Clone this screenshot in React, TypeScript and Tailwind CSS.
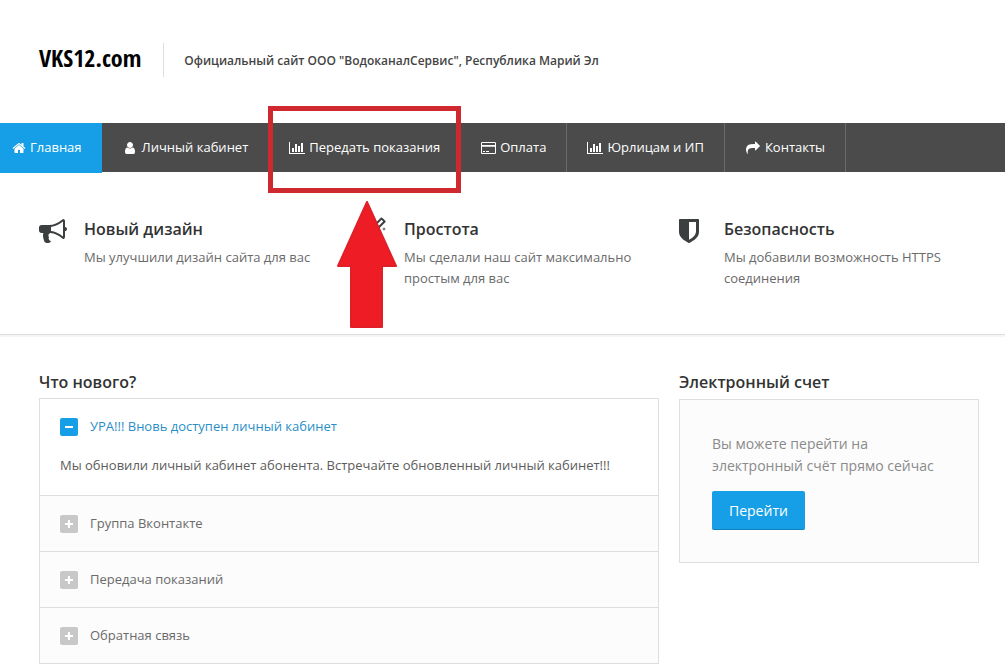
import { useState, type ReactNode } from 'react';

type IconProps = { box: string; d: string; className: string };

const Icon = ({ box, d, className }: IconProps) => (
  <svg viewBox={box} className={className} fill="currentColor" aria-hidden="true">
    <path d={d} />
  </svg>
);

const HOME =
  'M1472 992v480q0 26-19 45t-45 19h-384v-384h-256v384h-384q-26 0-45-19t-19-45v-480q0-1 .5-3t.5-3l575-474 575 474q1 2 1 6zm223-69l-62 74q-8 9-21 11h-3q-13 0-21-7l-692-577-692 577q-12 8-24 7-13-2-21-11l-62-74q-8-10-7-23.5t11-21.5l719-599q32-26 76-26t76 26l244 204v-195q0-14 9-23t23-9h192q14 0 23 9t9 23v408l219 182q10 8 11 21.5t-7 23.5z';
const USER =
  'M1536 1399q0 109-62.5 187t-150.5 78h-854q-88 0-150.5-78t-62.5-187q0-85 8.5-160.5t31.5-152 58.5-131 94-89 134.5-34.5q131 128 313 128t313-128q76 0 134.5 34.5t94 89 58.5 131 31.5 152 8.5 160.5zm-256-887q0 159-112.5 271.5t-271.5 112.5-271.5-112.5-112.5-271.5 112.5-271.5 271.5-112.5 271.5 112.5 112.5 271.5z';
const CHART =
  'M640 896v512h-256v-512h256zm384-512v1024h-256v-1024h256zm1024 1152v128h-2048v-1536h128v1408h1920zm-640-896v768h-256v-768h256zm384-384v1152h-256v-1152h256z';
const CARD =
  'M1760 128q66 0 113 47t47 113v1216q0 66-47 113t-113 47h-1600q-66 0-113-47t-47-113v-1216q0-66 47-113t113-47h1600zm-1600 128q-13 0-22.5 9.5t-9.5 22.5v224h1664v-224q0-13-9.5-22.5t-22.5-9.5h-1600zm1600 1280q13 0 22.5-9.5t9.5-22.5v-768h-1664v768q0 13 9.5 22.5t22.5 9.5h1600zm-1504-128v-128h256v128h-256zm384 0v-128h384v128h-384z';
const SHARE =
  'M1792 640q0 26-19 45l-512 512q-19 19-45 19t-45-19-19-45v-256h-224q-98 0-175.5 6t-154 21.5-133 42.5-105.5 69.5-80 101-48.5 138.5-17.5 181q0 55 5 123 0 6 2.5 23.5t2.5 26.5q0 15-8.5 25t-23.5 10q-16 0-28-17-7-9-13-22t-13.5-30-10.5-24q-127-285-127-451 0-199 53-333 162-403 875-403h224v-256q0-26 19-45t45-19 45 19l512 512q19 19 19 45z';
const BULLHORN =
  'M1664 640q53 0 90.5 37.5t37.5 90.5-37.5 90.5-90.5 37.5v384q0 52-38 90t-90 38q-417-347-812-380-58 19-91 66t-31 100.5 40 92.5q-20 33-23 65.5t6 58 33.5 55 48 50 61.5 50.5q-29 58-111.5 83t-168.5 11.5-132-55.5q-7-23-29.5-87.5t-32-94.5-23-89-15-101 3.5-98.5 22-110.5h-122q-66 0-113-47t-47-113v-192q0-66 47-113t113-47h480q435 0 896-384 52 0 90 38t38 90v384zm-128 604v-954q-394 302-768 343v270q377 42 768 341z';
const MAGIC =
  'M1254 581l293-293-107-107-293 293zm447-293q0 27-18 45l-1286 1286q-18 18-45 18t-45-18l-198-198q-18-18-18-45t18-45l1286-1286q18-18 45-18t45 18l198 198q18 18 18 45zm-1351-190l98 30-98 30-30 98-30-98-98-30 98-30 30-98zm350 162l196 60-196 60-60 196-60-196-196-60 196-60 60-196zm930 478l98 30-98 30-30 98-30-98-98-30 98-30 30-98zm-640-640l98 30-98 30-30 98-30-98-98-30 98-30 30-98z';
const SHIELD =
  'M1088 960v-640h-448v1137q119-63 213-137 235-184 235-360zm192-768v768q0 86-33.5 170.5t-83 150-118 127.5-126.5 103-121 77.5-89.5 49.5-42.5 20q-12 6-26 6t-26-6q-16-7-42.5-20t-89.5-49.5-121-77.5-126.5-103-118-127.5-83-150-33.5-170.5v-768q0-26 19-45t45-19h1152q26 0 45 19t19 45z';

const navLink = 'flex h-full items-center gap-1 text-[13px] text-white';

function NavItem({ icon, label, children }: { icon: ReactNode; label: string; children?: ReactNode }) {
  return (
    <li className="relative h-[49px] border-r border-[#6b6b6b] bg-[#4b4b4b]">
      <a href="#" className={`${navLink} px-5`}>
        {icon}
        {label}
      </a>
      {children}
    </li>
  );
}

function Pointer() {
  return (
    <>
      <div className="pointer-events-none absolute -inset-x-px -top-[17px] -bottom-[21px] z-10 border-5 border-[#d0282f]" />
      <svg
        viewBox="0 0 62 127"
        className="pointer-events-none absolute top-[78px] left-[67px] z-10 h-[127px] w-[62px]"
        aria-hidden="true"
      >
        <path
          d="M31 1 60 65H46V126H15V65H2Z"
          fill="#ee1c25"
          stroke="#e01f28"
          strokeWidth="2"
          strokeLinejoin="round"
        />
      </svg>
    </>
  );
}

function Feature({ icon, title, text }: { icon: ReactNode; title: string; text: string }) {
  return (
    <section className="flex">
      <div className="w-[45px] shrink-0 text-[#3b3f40]">{icon}</div>
      <div>
        <h3 className="text-[16px] leading-6 font-semibold text-[#333]">{title}</h3>
        <p className="mt-1.5 text-[13px] leading-[21px] text-[#6a6a6a]">{text}</p>
      </div>
    </section>
  );
}

const news = [
  {
    title: 'УРА!!! Вновь доступен личный кабинет',
    body: 'Мы обновили личный кабинет абонента. Встречайте обновленный личный кабинет!!!',
  },
  { title: 'Группа Вконтакте' },
  { title: 'Передача показаний' },
  { title: 'Обратная связь' },
];

function News() {
  const [open, setOpen] = useState(0);
  return (
    <div className="divide-y divide-[#dedede] border border-[#dedede]">
      {news.map((item, i) => {
        const active = i === open;
        return (
          <div key={item.title} className={active ? 'bg-white' : 'bg-[#fcfcfc]'}>
            <button
              type="button"
              aria-expanded={active}
              onClick={() => setOpen(active ? -1 : i)}
              className={`flex h-[55px] w-full items-center gap-3 px-5 text-left text-[13px] ${active ? 'text-[#2a8fc9]' : 'text-[#6a6a6a]'}`}
            >
              <span
                className={`flex size-[18px] shrink-0 items-center justify-center rounded-xs text-white ${active ? 'bg-[#169fe6]' : 'bg-[#c8c8c8]'}`}
              >
                <svg viewBox="0 0 18 18" className="size-[18px]" stroke="currentColor" strokeWidth="2" aria-hidden="true">
                  <path d={active ? 'M5 9h8' : 'M5 9h8M9 5v8'} />
                </svg>
              </span>
              {item.title}
            </button>
            {active && item.body && (
              <p className="px-5 pt-px pb-[19px] text-[13px] leading-[21px] text-[#5c5c5c]">{item.body}</p>
            )}
          </div>
        );
      })}
    </div>
  );
}

export default function App() {
  return (
    <div className="min-h-screen bg-white font-['Open_Sans','Noto_Sans',sans-serif]">
      <header className="flex h-[123px] items-center pr-[26px] pb-1 pl-[39px]">
        <a
          href="#"
          className="pb-1 font-['Open_Sans_Condensed','Liberation_Sans_Narrow','Open_Sans',sans-serif] text-2xl font-bold text-black"
        >
          VKS12.com
        </a>
        <p className="ml-[22px] flex h-[34px] items-center border-l border-[#dedede] pt-0.5 pl-5 text-[12px] font-semibold text-[#444]">
          Официальный сайт ООО "ВодоканалСервис", Республика Марий Эл
        </p>
      </header>

      <nav className="bg-[#4b4b4b]">
        <ul className="flex h-[49px] whitespace-nowrap">
          <li className="h-[50px] bg-[#169fe6]">
            <a href="#" className={`${navLink} pr-5 pl-3`}>
              <Icon box="0 0 1792 1792" d={HOME} className="h-[14px] w-[14px]" />
              Главная
            </a>
          </li>
          <NavItem icon={<Icon box="0 0 1792 1792" d={USER} className="h-[14px] w-4" />} label="Личный кабинет" />
          <NavItem icon={<Icon box="0 0 2048 1792" d={CHART} className="h-[14px] w-4" />} label="Передать показания">
            <Pointer />
          </NavItem>
          <NavItem icon={<Icon box="0 0 1920 1792" d={CARD} className="h-[14px] w-[15px]" />} label="Оплата" />
          <NavItem icon={<Icon box="0 0 2048 1792" d={CHART} className="h-[14px] w-4" />} label="Юрлицам и ИП" />
          <NavItem icon={<Icon box="0 0 1792 1792" d={SHARE} className="h-[14px] w-4" />} label="Контакты" />
        </ul>
      </nav>

      <div className="grid h-[163px] grid-cols-3 gap-5 border-b border-[#dedede] pt-[45px] pr-[26px] pl-[39px] shadow-[0_2px_0_#f5f5f5]">
        <Feature
          icon={<Icon box="0 0 1792 1792" d={BULLHORN} className="size-7" />}
          title="Новый дизайн"
          text="Мы улучшили дизайн сайта для вас"
        />
        <Feature
          icon={<Icon box="0 0 1792 1792" d={MAGIC} className="size-7" />}
          title="Простота"
          text="Мы сделали наш сайт максимально простым для вас"
        />
        <Feature
          icon={<Icon box="0 0 1280 1792" d={SHIELD} className="h-7 w-5" />}
          title="Безопасность"
          text="Мы добавили возможность HTTPS соединения"
        />
      </div>

      <main className="grid grid-cols-3 items-start gap-5 pt-[35px] pr-[26px] pl-[39px]">
        <section className="col-span-2">
          <h2 className="pb-1 text-[16px] leading-6 font-semibold text-[#333]">Что нового?</h2>
          <News />
        </section>
        <section>
          <h2 className="pb-[5px] text-[16px] leading-6 font-semibold text-[#333]">Электронный счет</h2>
          <div className="border border-[#dedede] bg-[#fcfcfc] px-8 pt-[33px] pb-8">
            <p className="text-[14px] leading-[22px] text-[#8a8a8a]">
              Вы можете перейти на электронный счёт прямо сейчас
            </p>
            <button
              type="button"
              className="mt-3.5 h-[39px] rounded-xs border-b border-[#1280ba] bg-[#169fe6] px-[17px] text-[14px] text-white"
            >
              Перейти
            </button>
          </div>
        </section>
      </main>
    </div>
  );
}
